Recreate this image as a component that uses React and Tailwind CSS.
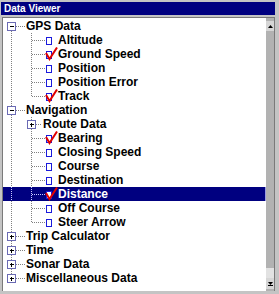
const ROWS = [
  { label: "GPS Data", kind: "root", open: true, first: true },
  { label: "Altitude", kind: "leaf" },
  { label: "Ground Speed", kind: "leaf", checked: true },
  { label: "Position", kind: "leaf" },
  { label: "Position Error", kind: "leaf" },
  { label: "Track", kind: "leaf", checked: true, last: true },
  { label: "Navigation", kind: "root", open: true },
  { label: "Route Data", kind: "branch" },
  { label: "Bearing", kind: "leaf", checked: true },
  { label: "Closing Speed", kind: "leaf" },
  { label: "Course", kind: "leaf" },
  { label: "Destination", kind: "leaf" },
  { label: "Distance", kind: "leaf", checked: true, selected: true },
  { label: "Off Course", kind: "leaf" },
  { label: "Steer Arrow", kind: "leaf", last: true },
  { label: "Trip Calculator", kind: "root" },
  { label: "Time", kind: "root" },
  { label: "Sonar Data", kind: "root" },
  { label: "Miscellaneous Data", kind: "root", lastRoot: true },
];

function Dots({ x1, y1, x2, y2, color }) {
  return (
    <line x1={x1} y1={y1} x2={x2} y2={y2} stroke={color} strokeWidth="1" strokeDasharray="1 1" />
  );
}

function Expander({ x, open }) {
  return (
    <g>
      <rect x={x + 0.5} y="3.5" width="8" height="8" fill="#fff" stroke="#6a6ab4" />
      <line x1={x + 2.5} y1="7.5" x2={x + 6.5} y2="7.5" stroke="#000" />
      {!open ? <line x1={x + 4.5} y1="5.5" x2={x + 4.5} y2="9.5" stroke="#000" /> : null}
    </g>
  );
}

function Gutter({ row }) {
  const c = row.selected ? "#c8c8ff" : "#808080";

  if (row.kind === "root") {
    return (
      <svg width="23" height="14" shapeRendering="crispEdges" className="shrink-0">
        {!row.first ? <Dots x1={8.5} y1={0} x2={8.5} y2={3} color={c} /> : null}
        {!row.lastRoot ? <Dots x1={8.5} y1={12} x2={8.5} y2={14} color={c} /> : null}
        <Dots x1={13} y1={7.5} x2={22} y2={7.5} color={c} />
        <Expander x={4} open={row.open} />
      </svg>
    );
  }

  if (row.kind === "branch") {
    return (
      <svg width="40" height="14" shapeRendering="crispEdges" className="shrink-0">
        <Dots x1={8.5} y1={0} x2={8.5} y2={14} color={c} />
        <Dots x1={28.5} y1={0} x2={28.5} y2={3} color={c} />
        <Dots x1={28.5} y1={12} x2={28.5} y2={14} color={c} />
        <Dots x1={33} y1={7.5} x2={39} y2={7.5} color={c} />
        <Expander x={24} />
      </svg>
    );
  }

  return (
    <svg width="55" height="14" className="shrink-0">
      <g shapeRendering="crispEdges">
        <Dots x1={8.5} y1={0} x2={8.5} y2={14} color={c} />
        <Dots x1={28.5} y1={0} x2={28.5} y2={row.last ? 8 : 14} color={c} />
        <Dots x1={29} y1={7.5} x2={42} y2={7.5} color={c} />
        <rect x="43.5" y="4.5" width="5" height="7" fill="#fff" stroke="#1a1adc" />
      </g>
      {row.checked ? (
        <polyline
          points="43,6 46.5,12 54,0.5"
          fill="none"
          stroke="#e00000"
          strokeWidth="2"
          strokeLinejoin="miter"
        />
      ) : null}
    </svg>
  );
}

function TreeRow({ row }) {
  return (
    <div
      className={`flex h-[14px] items-center ${
        row.selected ? "border-r border-[#9a9ae0] bg-[#000080] text-white" : "text-black"
      }`}
    >
      <Gutter row={row} />
      <span className="whitespace-nowrap text-[12px] font-bold leading-[14px]">{row.label}</span>
    </div>
  );
}

export default function App() {
  return (
    <div
      className="flex h-[294px] w-[279px] flex-col bg-[#c4c4c4] pt-[2px]"
      style={{ fontFamily: '"Liberation Sans", Arial, sans-serif' }}
    >
      <div className="ml-[1px] mr-[4px] flex h-[13px] items-center bg-[#000080] pl-[3px]">
        <span className="text-[10px] font-bold leading-[13px] text-white">Data Viewer</span>
      </div>

      <div className="ml-[2px] mr-[4px] mt-[2px] flex h-[274px] border-l border-t border-r border-[#7a7a7a]">
        <div className="flex-1 overflow-hidden bg-white pt-[1px]">
          {ROWS.map((row) => (
            <TreeRow key={row.label} row={row} />
          ))}
        </div>

        <div className="flex w-[8px] flex-col bg-[#b2b2b2]">
          <div className="mt-[3px] flex h-[10px] items-center justify-center bg-[#d6d6d6]">
            <svg width="5" height="3">
              <polygon points="2.5,0 5,3 0,3" fill="#000" />
            </svg>
          </div>
          <div className="flex-1" />
          <div className="h-[10px] bg-[#e2e2e2]" />
          <div className="mb-[2px] flex h-[11px] items-center justify-center bg-[#d6d6d6]">
            <svg width="5" height="4">
              <polygon points="0,0 5,0 2.5,3" fill="#000" />
              <rect x="0" y="3" width="5" height="1" fill="#000" />
            </svg>
          </div>
        </div>
      </div>
    </div>
  );
}
